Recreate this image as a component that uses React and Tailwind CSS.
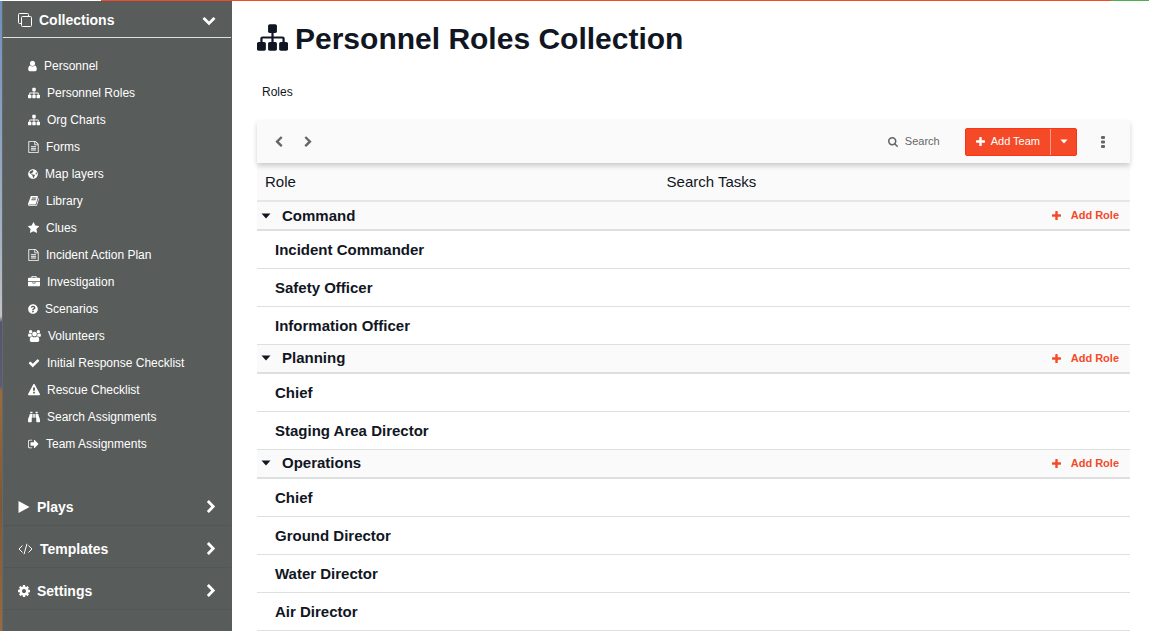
import React, { useState } from "react";
import { FaGlobeAmericas, FaQuestionCircle, FaBinoculars } from "react-icons/fa";

const glyphs = {
  user: { box: "256 0 1280 1792", d: "M1536 1399q0 109-62.5 187t-150.5 78h-854q-88 0-150.5-78t-62.5-187q0-85 8.5-160.5t31.5-152 58.5-131 94-89 134.5-34.5q131 128 313 128t313-128q76 0 134.5 34.5t94 89 58.5 131 31.5 152 8.5 160.5zm-256-887q0 159-112.5 271.5t-271.5 112.5-271.5-112.5-112.5-271.5 112.5-271.5 271.5-112.5 271.5 112.5 112.5 271.5z" },
  sitemap: { box: "0 0 1792 1792", d: "M1792 1248v320q0 40-28 68t-68 28h-320q-40 0-68-28t-28-68v-320q0-40 28-68t68-28h96v-192h-512v192h96q40 0 68 28t28 68v320q0 40-28 68t-68 28h-320q-40 0-68-28t-28-68v-320q0-40 28-68t68-28h96v-192h-512v192h96q40 0 68 28t28 68v320q0 40-28 68t-68 28h-320q-40 0-68-28t-28-68v-320q0-40 28-68t68-28h96v-192q0-52 38-90t90-38h512v-192h-96q-40 0-68-28t-28-68v-320q0-40 28-68t68-28h320q40 0 68 28t28 68v320q0 40-28 68t-68 28h-96v192h512q52 0 90 38t38 90v192h96q40 0 68 28t28 68z" },
  file: { box: "128 0 1536 1792", d: "M1596 380q28 28 48 76t20 88v1152q0 40-28 68t-68 28h-1344q-40 0-68-28t-28-68v-1600q0-40 28-68t68-28h896q40 0 88 20t76 48zm-444-244v376h376q-10-29-22-41l-313-313q-12-12-41-22zm384 1528v-1024h-416q-40 0-68-28t-28-68v-416h-768v1536h1280zm-1024-864q0-14 9-23t23-9h704q14 0 23 9t9 23v64q0 14-9 23t-23 9h-704q-14 0-23-9t-9-23v-64zm736 224q14 0 23 9t9 23v64q0 14-9 23t-23 9h-704q-14 0-23-9t-9-23v-64q0-14 9-23t23-9h704zm0 256q14 0 23 9t9 23v64q0 14-9 23t-23 9h-704q-14 0-23-9t-9-23v-64q0-14 9-23t23-9h704z" },
  book: { box: "64 0 1664 1792", d: "M1703 478q40 57 18 129l-275 906q-19 64-76.5 107.5t-122.5 43.5h-923q-77 0-148.5-53.5t-99.5-131.5q-24-67-2-127 0-4 3-27t4-37q1-8-3-21.5t-3-19.5q2-11 8-21t16.5-23.5 16.5-23.5q23-38 45-91.5t30-91.5q3-10 .5-30t-.5-28q3-11 17-28t17-23q21-36 42-92t25-90q1-9-2.5-32t.5-28q4-13 22-30.5t22-22.5q19-26 42.5-84.5t27.5-96.5q1-8-3-25.5t-2-26.5q2-8 9-18t18-23 17-21q8-12 16.5-30.5t15-35 16-36 19.5-32 26.5-23.5 36-11.5 47.5 5.5l-1 3q38-9 51-9h761q74 0 114 56t18 130l-274 906q-36 119-71.5 153.5t-128.5 34.5h-869q-27 0-38 15-11 16-1 43 24 70 144 70h923q29 0 56-15.5t35-41.5l300-987q7-22 5-57 38 15 59 43zm-1064 2q-4 13 2 22.5t20 9.5h608q13 0 25.5-9.5t16.5-22.5l21-64q4-13-2-22.5t-20-9.5h-608q-13 0-25.5 9.5t-16.5 22.5zm-83 256q-4 13 2 22.5t20 9.5h608q13 0 25.5-9.5t16.5-22.5l21-64q4-13-2-22.5t-20-9.5h-608q-13 0-25.5 9.5t-16.5 22.5z" },
  star: { box: "64 0 1664 1792", d: "M1728 647q0 22-26 48l-363 354 86 500q1 7 1 20 0 21-10.5 35.5t-30.5 14.5q-19 0-40-12l-449-236-449 236q-22 12-40 12-21 0-31.5-14.5t-10.5-35.5q0-6 2-20l86-500-364-354q-25-27-25-48 0-37 56-46l502-73 225-455q19-41 49-41t49 41l225 455 502 73q56 9 56 46z" },
  briefcase: { box: "0 0 1792 1792", d: "M640 256h512v-128h-512v128zm1152 640v480q0 66-47 113t-113 47h-1472q-66 0-113-47t-47-113v-480h672v160q0 26 19 45t45 19h320q26 0 45-19t19-45v-160h672zm-768 0v128h-256v-128h256zm768-480v384h-1792v-384q0-66 47-113t113-47h352v-160q0-40 28-68t68-28h576q40 0 68 28t28 68v160h352q66 0 113 47t47 113z" },
  group: { box: "0 0 1920 1792", d: "M960 256a352 352 0 1 1 0 704a352 352 0 1 1 0-704zM384 0a256 256 0 1 1 0 512a256 256 0 1 1 0-512zM1536 0a256 256 0 1 1 0 512a256 256 0 1 1 0-512zM593 896q-162 5-265 128h-134q-82 0-138-40.500t-56-118.500q0-353 124-353 6 0 43.500 21t97.500 42.500 119 21.500q67 0 133-23-5 37-5 66 0 139 81 256zM1664 1533q0 120-73 189.500t-194 69.500h-874q-121 0-194-69.500t-73-189.500q0-53 3.500-103.500t14-109 26.500-108.500 43-97.500 62-81 85.500-53.500 111.500-20q10 0 43 21.500t73 48 107 48 135 21.500 135-21.500 107-48 73-48 43-21.500q61 0 111.500 20t85.500 53.500 62 81 43 97.500 26.500 108.500 14 109 3.500 103.500zM1920 865q0 78-56 118.500t-138 40.500h-134q-103-123-265-128 81-117 81-256 0-29-5-66 66 23 133 23 59 0 119-21.500t97.500-42.500 43.500-21q124 0 124 353z" },
  check: { box: "0 0 1792 1792", d: "M1671 566q0 40-28 68l-724 724-136 136q-28 28-68 28t-68-28l-136-136-362-362q-28-28-28-68t28-68l136-136q28-28 68-28t68 28l294 295 656-657q28-28 68-28t68 28l136 136q28 28 28 68z" },
  warning: { box: "0 0 1792 1792", d: "M1024 1375v-190q0-14-9.5-23.5t-22.5-9.5h-192q-13 0-22.5 9.5t-9.5 23.5v190q0 14 9.5 23.5t22.5 9.5h192q13 0 22.5-9.5t9.5-23.5zm-2-374l18-459q0-12-10-19-13-11-24-11h-220q-11 0-24 11-10 7-10 21l17 457q0 10 10 16.5t24 6.5h185q14 0 23.5-6.5t10.5-16.5zm-14-934l768 1408q35 63-2 126-17 29-46.5 46t-63.5 17h-1536q-34 0-63.5-17t-46.5-46q-37-63-2-126l768-1408q17-31 47-49t65-18 65 18 47 49z" },
  signout: { box: "96 0 1600 1792", d: "M704 1440q0 4 1 20t.5 26.5-3 23.5-10 19.5-20.5 6.5h-320q-119 0-203.5-84.5t-84.5-203.5v-704q0-119 84.5-203.5t203.5-84.5h320q13 0 22.5 9.5t9.5 22.5q0 4 1 20t.5 26.5-3 23.5-10 19.5-20.5 6.5h-320q-66 0-113 47t-47 113v704q0 66 47 113t113 47h312l11.5 1 11.5 3 8 5.5 7 9 2 13.5zm928-544q0 26-19 45l-544 544q-19 19-45 19t-45-19-19-45v-288h-448q-26 0-45-19t-19-45v-384q0-26 19-45t45-19h448v-288q0-26 19-45t45-19 45 19l544 544q19 19 19 45z" },
  right: { box: "256 0 1216 1792", d: "M1363 877l-742 742q-19 19-45 19t-45-19l-166-166q-19-19-19-45t19-45l531-531-531-531q-19-19-19-45t19-45l166-166q19-19 45-19t45 19l742 742q19 19 19 45t-19 45z" },
  left: { box: "320 0 1216 1792", d: "M1427 301l-531 531 531 531q19 19 19 45t-19 45l-166 166q-19 19-45 19t-45-19l-742-742q-19-19-19-45t19-45l742-742q19-19 45-19t45 19l166 166q19 19 19 45t-19 45z" },
  down: { box: "0 0 1792 1792", d: "M1683 808l-742 741q-19 19-45 19t-45-19l-742-741q-19-19-19-45.5t19-45.5l166-165q19-19 45-19t45 19l531 531 531-531q19-19 45-19t45 19l166 165q19 19 19 45.5t-19 45.5z" },
  plus: { box: "192 128 1408 1408", d: "M1600 736v192q0 40-28 68t-68 28h-416v416q0 40-28 68t-68 28h-192q-40 0-68-28t-28-68v-416h-416q-40 0-68-28t-28-68v-192q0-40 28-68t68-28h416v-416q0-40 28-68t68-28h192q40 0 68 28t28 68v416h416q40 0 68 28t28 68z" },
  search: { box: "64 128 1664 1664", d: "M1216 832q0-185-131.5-316.5t-316.5-131.5-316.5 131.5-131.5 316.5 131.5 316.5 316.5 131.5 316.5-131.5 131.5-316.5zm512 832q0 52-38 90t-90 38q-54 0-90-38l-343-342q-179 124-399 124-143 0-273.5-55.5t-225-150-150-225-55.5-273.5 55.5-273.5 150-225 225-150 273.5-55.5 273.5 55.5 225 150 150 225 55.5 273.5q0 220-124 399l343 343q37 37 37 90z" },
  cog: { box: "128 128 1536 1536", d: "M1152 896q0-106-75-181t-181-75-181 75-75 181 75 181 181 75 181-75 75-181zm512-109v222q0 12-8 23t-20 13l-185 28q-19 54-39 91 35 50 107 138 10 12 10 25t-9 23q-27 37-99 108t-94 71q-12 0-26-9l-138-108q-44 23-91 38-16 136-29 186-7 28-36 28h-222q-14 0-24.5-8.5t-11.5-21.5l-28-184q-49-16-90-37l-141 107q-10 9-25 9-14 0-25-11-126-114-165-168-7-10-7-23 0-12 8-23 15-21 51-66.5t54-70.5q-27-50-41-99l-183-27q-13-2-21-12.5t-8-23.5v-222q0-12 8-23t19-13l186-28q14-46 39-92-40-57-107-138-10-12-10-24 0-10 9-23 26-36 98.5-107.5t94.5-71.5q13 0 26 10l138 107q44-23 91-38 16-136 29-186 7-28 36-28h222q14 0 24.5 8.5t11.5 21.5l28 184q49 16 90 37l142-107q9-9 24-9 13 0 25 10 129 119 165 170 7 8 7 22 0 12-8 23-15 21-51 66.5t-54 70.5q26 50 41 98l183 28q13 2 21 12.5t8 23.5z" },
  play: { box: "0 0 12 12", d: "M0.500 0L11.500 6L0.500 12Z" },
  caret: { box: "0 0 10 6", d: "M0.500 0.500H9.500L5 5.500Z" },
  dots: { box: "0 0 4 12", d: "M1 0h2q1 0 1 1v1q0 1-1 1h-2q-1 0-1-1v-1q0-1 1-1zM1 4.500h2q1 0 1 1v1q0 1-1 1h-2q-1 0-1-1v-1q0-1 1-1zM1 9h2q1 0 1 1v1q0 1-1 1h-2q-1 0-1-1v-1q0-1 1-1z" },
};

function Glyph({ name, className }) {
  return (
    <svg viewBox={glyphs[name].box} className={`shrink-0 fill-current ${className}`} aria-hidden="true">
      <path d={glyphs[name].d} />
    </svg>
  );
}

function CloneIcon() {
  return (
    <svg viewBox="0 0 14 14" className="h-[14px] w-[14px] shrink-0" fill="none" stroke="currentColor" aria-hidden="true">
      <rect x="3.500" y="3.500" width="10" height="10" rx="1" />
      <path d="M3.500 10.500H1.500a1 1 0 0 1-1-1v-8a1 1 0 0 1 1-1h8a1 1 0 0 1 1 1v2" />
    </svg>
  );
}

function CodeIcon() {
  return (
    <svg viewBox="0 0 15 12" className="h-3 w-[15px] shrink-0" fill="none" stroke="currentColor" aria-hidden="true">
      <path d="M4.500 2.500L1 6l3.500 3.500M10.500 2.500L14 6l-3.500 3.500M9 0.800L6 11.200" />
    </svg>
  );
}

const links = [
  ["Personnel", <Glyph name="user" className="h-3 w-[9px]" />],
  ["Personnel Roles", <Glyph name="sitemap" className="h-3 w-3" />],
  ["Org Charts", <Glyph name="sitemap" className="h-3 w-3" />],
  ["Forms", <Glyph name="file" className="h-3 w-[11px]" />],
  ["Map layers", <FaGlobeAmericas className="h-[10px] w-[10px] shrink-0" />],
  ["Library", <Glyph name="book" className="h-3 w-[11px]" />],
  ["Clues", <Glyph name="star" className="h-3 w-[11px]" />],
  ["Incident Action Plan", <Glyph name="file" className="h-3 w-[11px]" />],
  ["Investigation", <Glyph name="briefcase" className="h-3 w-3" />],
  ["Scenarios", <FaQuestionCircle className="h-[10px] w-[10px] shrink-0" />],
  ["Volunteers", <Glyph name="group" className="h-3 w-[13px]" />],
  ["Initial Response Checklist", <Glyph name="check" className="h-3 w-3" />],
  ["Rescue Checklist", <Glyph name="warning" className="h-3 w-3" />],
  ["Search Assignments", <FaBinoculars className="h-3 w-3 shrink-0" />],
  ["Team Assignments", <Glyph name="signout" className="h-3 w-[11px]" />],
];

const sections = [
  ["Plays", <Glyph name="play" className="h-3 w-3" />],
  ["Templates", <CodeIcon />],
  ["Settings", <Glyph name="cog" className="h-3 w-3" />],
];

const teams = [
  { name: "Command", roles: ["Incident Commander", "Safety Officer", "Information Officer"] },
  { name: "Planning", roles: ["Chief", "Staging Area Director"] },
  { name: "Operations", roles: ["Chief", "Ground Director", "Water Director", "Air Director"] },
];

function Sidebar() {
  return (
    <div className="flex w-[232px] shrink-0 bg-[#585c5b] text-white">
      <div className="w-[2px] shrink-0 bg-[linear-gradient(to_bottom,#6d8fbd_0%,#a9b4c4_40%,#c3c3c6_50%,#55556f_51%,#5c5a78_61%,#9a6b3a_62%,#7d5838_80%,#9a6a3c_100%)]" />
      <nav aria-label="Main" className="flex-1 border-l border-[#646867] pr-px">
        <button type="button" aria-expanded="true" className="flex h-[37px] w-full items-center gap-[7px] border-b border-[#dfe1e1] pt-[2px] pr-[15px] pl-[15px] text-sm font-bold">
          <CloneIcon />
          <span className="flex-1 text-left">Collections</span>
          <Glyph name="down" className="h-[14px] w-[14px]" />
        </button>
        <ul className="pt-[14px] pb-[27px]">
          {links.map(([label, icon]) => (
            <li key={label}>
              <a href="#" className="flex h-[27px] items-center gap-[7px] pl-[25px] text-xs">
                {icon}
                {label}
              </a>
            </li>
          ))}
        </ul>
        {sections.map(([label, icon]) => (
          <button key={label} type="button" className="flex h-[42px] w-full items-center gap-[7px] border-b border-[#525655] pt-[4px] pr-[15px] pl-[15px] text-sm font-bold">
            {icon}
            <span className="flex-1 text-left">{label}</span>
            <Glyph name="right" className="h-[14px] w-[10px]" />
          </button>
        ))}
      </nav>
    </div>
  );
}

function Toolbar() {
  return (
    <div className="relative flex h-[43px] items-center bg-[#fafafa] pr-[25px] pl-[18px] text-[11px] text-[#666] shadow-[0_3px_5px_rgba(0,0,0,0.18)]">
      <div className="flex gap-[21px]">
        <button type="button" aria-label="Previous"><Glyph name="left" className="h-3 w-2" /></button>
        <button type="button" aria-label="Next"><Glyph name="right" className="h-3 w-2" /></button>
      </div>
      <button type="button" className="mr-[25px] ml-auto flex items-center gap-[7px]">
        <Glyph name="search" className="h-[10px] w-[10px]" />
        Search
      </button>
      <div className="mr-6 flex h-7 overflow-hidden rounded-[2px] border border-[#fb3413] bg-[#f44a28] text-white">
        <button type="button" className="flex items-center gap-[6px] px-[10px]">
          <Glyph name="plus" className="h-[9px] w-[9px]" />
          Add Team
        </button>
        <button type="button" aria-label="More add options" className="flex w-[26px] items-center justify-center border-l border-[#ff9c86]">
          <Glyph name="caret" className="h-[5px] w-2" />
        </button>
      </div>
      <button type="button" aria-label="More actions"><Glyph name="dots" className="h-3 w-1" /></button>
    </div>
  );
}

function Team({ name, roles }) {
  const [open, setOpen] = useState(true);
  return (
    <tbody>
      <tr className="h-[29px] border-b-2 border-[#dedfdf] bg-[#fafafa]">
        <th scope="rowgroup" colSpan={2} className="p-0">
          <div className="flex items-center justify-between pr-[11px] pl-[4px]">
            <button type="button" aria-expanded={open} onClick={() => setOpen(!open)} className="flex items-center gap-[11px] text-[15px] leading-5 font-bold">
              <Glyph name="caret" className="h-[6px] w-[10px]" />
              {name}
            </button>
            <button type="button" className="flex items-center gap-[10px] text-[11px] font-bold text-[#f44a28]">
              <Glyph name="plus" className="h-[9px] w-[9px]" />
              Add Role
            </button>
          </div>
        </th>
      </tr>
      {open && roles.map((role) => (
        <tr key={role} className="h-[38px] border-b border-[#dedfdf]">
          <th scope="row" className="p-0 pt-[2px] pl-[18px] text-left text-[15px] leading-5 font-bold">{role}</th>
          <td className="p-0" />
        </tr>
      ))}
    </tbody>
  );
}

export default function App() {
  return (
    <div className="flex min-h-screen flex-col bg-white font-['Liberation_Sans',Arial,sans-serif] text-[#111623]">
      <div className="flex h-px">
        <div className="w-[101px] bg-white" />
        <div className="flex-1 bg-[#f44a28]" />
        <div className="w-[38px] bg-[#4caf50]" />
      </div>
      <div className="flex flex-1">
        <Sidebar />
        <main className="min-w-0 flex-1 pr-[19px] pl-[25px]">
          <h1 className="flex items-center gap-[7px] pt-5 text-[30px] leading-9 font-bold">
            <Glyph name="sitemap" className="mb-1 h-[31px] w-[31px]" />
            Personnel Roles Collection
          </h1>
          <p className="mt-[27px] mb-5 pl-[5px] text-xs leading-4">Roles</p>
          <Toolbar />
          <table className="w-full table-fixed border-collapse">
            <thead>
              <tr className="h-[38px] border-b-2 border-[#e6e6e6] bg-[#fafafa] text-left text-[15px] leading-5">
                <th scope="col" className="w-[46%] p-0 pl-2 font-normal">Role</th>
                <th scope="col" className="p-0 pl-2 font-normal">Search Tasks</th>
              </tr>
            </thead>
            {teams.map((team) => (
              <Team key={team.name} {...team} />
            ))}
          </table>
        </main>
      </div>
    </div>
  );
}
